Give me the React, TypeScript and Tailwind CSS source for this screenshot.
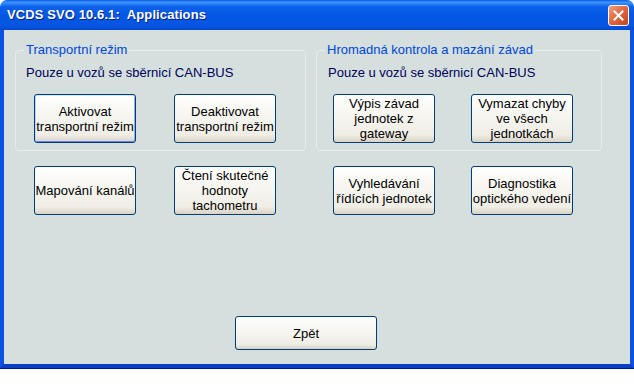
const font = { fontFamily: '"Liberation Sans", Arial, sans-serif' };

function XpButton({
  label,
  className = "",
  active = false,
}: {
  label: string[];
  className?: string;
  active?: boolean;
}) {
  return (
    <button
      className={
        "flex flex-col items-center justify-center rounded-[3px] border border-[#003c74] bg-[linear-gradient(to_bottom,#ffffff_0%,#f7f6f1_40%,#efede5_85%,#d8d3c6_100%)] text-[13px] leading-[15px] text-black " +
        (active
          ? "shadow-[inset_0_1px_0_#cee7ff,inset_1px_0_0_#bcd4f6,inset_-1px_0_0_#89adf0,inset_0_-1px_0_#6982ee] "
          : "") +
        className
      }
    >
      {label.map((l) => (
        <span key={l} className="whitespace-nowrap">
          {l}
        </span>
      ))}
    </button>
  );
}

function GroupBox({
  title,
  className = "",
  children,
}: {
  title: string;
  className?: string;
  children: React.ReactNode;
}) {
  return (
    <div
      className={
        "relative rounded-[4px] border border-[#e6edec] " + className
      }
    >
      <span className="absolute -top-[9px] left-[8px] bg-[#d4dfde] px-[2px] text-[13px] leading-[15px] text-[#0046d5]">
        {title}
      </span>
      {children}
    </div>
  );
}

export default function App() {
  return (
    <div className="h-[384px] w-[634px] bg-white" style={font}>
      <div className="flex h-[368px] w-[634px] flex-col">
        {/* title bar */}
        <div className="flex h-[30px] shrink-0 items-center justify-between rounded-t-[7px] bg-[linear-gradient(to_bottom,#0a5be0_0%,#3d95ff_8%,#0b61ea_22%,#0458e4_50%,#0455e2_85%,#0347d0_100%)] pl-[7px] pr-[5px]">
          <span className="text-[13px] font-bold tracking-[0.1px] text-white [text-shadow:1px_1px_0_#0a1f80]">
            VCDS SVO 10.6.1:&nbsp; Applications
          </span>
          <div className="flex h-[21px] w-[21px] items-center justify-center rounded-[3px] border border-white bg-[linear-gradient(135deg,#f0a080_0%,#e16a43_45%,#c8421c_100%)]">
            <svg width="11" height="11" viewBox="0 0 11 11">
              <path
                d="M1.5 1.5 L9.5 9.5 M9.5 1.5 L1.5 9.5"
                stroke="white"
                strokeWidth="2"
                strokeLinecap="square"
              />
            </svg>
          </div>
        </div>

        {/* body */}
        <div className="flex flex-1 flex-col border-x-4 border-b-4 border-x-[#0b52e2] border-b-[#0a3fc4] bg-[#d4dfde] shadow-[0_1px_0_#001f8c]">
          <div className="flex gap-[10px] pl-[11px] pt-[20px]">
            {/* left column */}
            <div className="flex w-[291px] flex-col">
              <GroupBox title="Transportní režim" className="h-[101px]">
                <div className="pl-[10px] pt-[14px] text-[13px] leading-[15px] text-[#00005a]">
                  Pouze u vozů se sběrnicí CAN-BUS
                </div>
                <div className="mt-[14px] flex gap-[38px] pl-[18px]">
                  <XpButton
                    active
                    className="h-[49px] w-[102px]"
                    label={["Aktivovat", "transportní režim"]}
                  />
                  <XpButton
                    className="h-[49px] w-[102px]"
                    label={["Deaktivovat", "transportní režim"]}
                  />
                </div>
              </GroupBox>
              <div className="mt-[15px] flex gap-[38px] pl-[19px]">
                <XpButton
                  className="h-[49px] w-[102px]"
                  label={["Mapování kanálů"]}
                />
                <XpButton
                  className="h-[49px] w-[102px]"
                  label={["Čtení skutečné", "hodnoty", "tachometru"]}
                />
              </div>
            </div>

            {/* right column */}
            <div className="flex w-[286px] flex-col">
              <GroupBox
                title="Hromadná kontrola a mazání závad"
                className="h-[101px]"
              >
                <div className="pl-[11px] pt-[14px] text-[13px] leading-[15px] text-[#00005a]">
                  Pouze u vozů se sběrnicí CAN-BUS
                </div>
                <div className="mt-[14px] flex gap-[36px] pl-[16px]">
                  <XpButton
                    className="h-[49px] w-[102px]"
                    label={["Výpis závad", "jednotek z", "gateway"]}
                  />
                  <XpButton
                    className="h-[49px] w-[102px]"
                    label={["Vymazat chyby", "ve všech", "jednotkách"]}
                  />
                </div>
              </GroupBox>
              <div className="mt-[15px] flex gap-[36px] pl-[17px]">
                <XpButton
                  className="h-[49px] w-[102px]"
                  label={["Vyhledávání", "řídících jednotek"]}
                />
                <XpButton
                  className="h-[49px] w-[102px]"
                  label={["Diagnostika", "optického vedení"]}
                />
              </div>
            </div>
          </div>

          <div className="mt-[101px] pl-[231px]">
            <XpButton className="h-[34px] w-[142px]" label={["Zpět"]} />
          </div>
        </div>
      </div>
    </div>
  );
}
